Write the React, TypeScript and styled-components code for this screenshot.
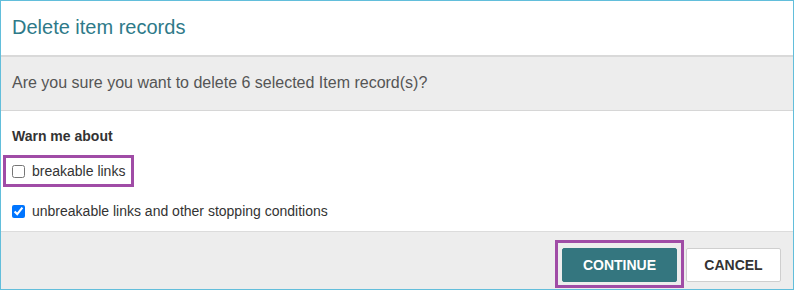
import React from "react";
import styled, { createGlobalStyle } from "styled-components";

const Global = createGlobalStyle`
  html, body { margin: 0; padding: 0; background: #ffffff; }
  body { font-family: "Liberation Sans", Arial, sans-serif; }
  * { box-sizing: border-box; }
`;

const Dialog = styled.div`
  width: 794px;
  height: 290px;
  border: 1px solid #62bedb;
  display: flex;
  flex-direction: column;
  background: #ffffff;
`;

const Header = styled.div`
  height: 56px;
  border-bottom: 2px solid #d9d9d9;
  display: flex;
  align-items: center;
  padding: 0 11px 2px;
`;

const Title = styled.h1`
  margin: 0;
  font-size: 20px;
  font-weight: 400;
  color: #2e7a89;
`;

const Question = styled.div`
  height: 54px;
  background: #ededed;
  border-bottom: 1px solid #d6d6d6;
  display: flex;
  align-items: center;
  padding: 0 11px 1px;
  font-size: 16px;
  color: #555555;
`;

const Body = styled.div`
  height: 121px;
  border-bottom: 1px solid #dcdcdc;
  padding: 15px 12px 0 2px;
  display: flex;
  flex-direction: column;
  align-items: flex-start;
  gap: 8px;
`;

const Heading = styled.div`
  font-size: 14px;
  font-weight: 700;
  line-height: 20px;
  color: #333333;
  margin: 0 0 1px 9px;
`;

const Option = styled.label<{ $highlight?: boolean }>`
  display: inline-flex;
  align-items: center;
  gap: 7px;
  height: 32px;
  padding: 0 6px;
  border: 3px solid ${(p) => (p.$highlight ? "#a04ca6" : "transparent")};
  font-size: 14px;
  color: #333333;
  cursor: pointer;

  input {
    margin: 0;
    width: 13px;
    height: 13px;
  }
`;

const Footer = styled.div`
  flex: 1;
  background: #ededed;
  display: flex;
  justify-content: flex-end;
  align-items: flex-start;
  gap: 9px;
  padding: 16px 12px 0;
`;

const Button = styled.button<{ $primary?: boolean; $highlight?: boolean }>`
  position: relative;
  height: 34px;
  width: ${(p) => (p.$primary ? "115px" : "95px")};
  border-radius: 2px;
  border: 1px solid ${(p) => (p.$primary ? "#34767f" : "#cfcfcf")};
  background: ${(p) => (p.$primary ? "#34767f" : "#ffffff")};
  color: ${(p) => (p.$primary ? "#ffffff" : "#333333")};
  font-family: "Liberation Sans", Arial, sans-serif;
  font-size: 14px;
  font-weight: 700;
  padding: 0;
  cursor: pointer;

  &::after {
    content: "";
    display: ${(p) => (p.$highlight ? "block" : "none")};
    position: absolute;
    top: -9px;
    left: -8px;
    right: -8px;
    bottom: -7px;
    border: 3px solid #a04ca6;
    pointer-events: none;
  }
`;

export default function App() {
  return (
    <>
      <Global />
      <Dialog>
        <Header>
          <Title>Delete item records</Title>
        </Header>
        <Question>Are you sure you want to delete 6 selected Item record(s)?</Question>
        <Body>
          <Heading>Warn me about</Heading>
          <Option $highlight>
            <input type="checkbox" />
            breakable links
          </Option>
          <Option>
            <input type="checkbox" defaultChecked />
            unbreakable links and other stopping conditions
          </Option>
        </Body>
        <Footer>
          <Button $primary $highlight>CONTINUE</Button>
          <Button>CANCEL</Button>
        </Footer>
      </Dialog>
    </>
  );
}
